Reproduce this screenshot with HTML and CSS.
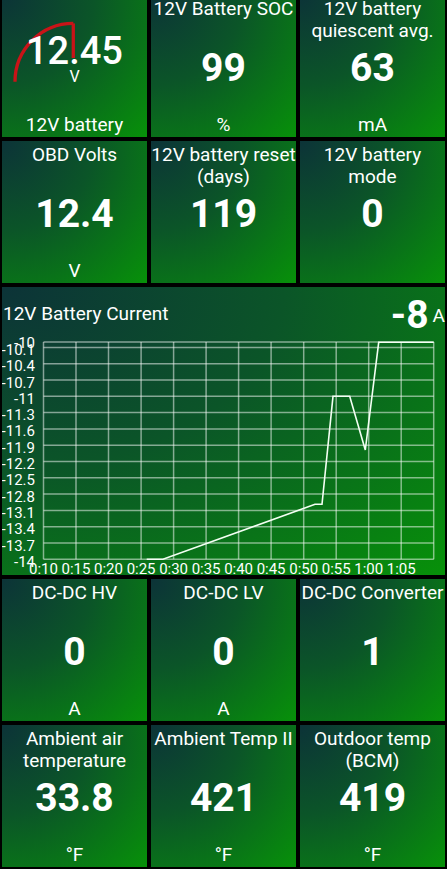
FILE: index.html
```html
<!DOCTYPE html>
<html lang="en">
<head>
    <meta charset="UTF-8">
    <meta name="viewport" content="width=device-width, initial-scale=1.0">
    <title>Dashboard</title>
    <link rel="stylesheet" href="styles.css">
</head>
<body>
    <div class="dash">
        <div class="tile gauge-tile">
            <svg class="gauge" viewBox="0 0 145 142">
                <path d="M13 86.7 A58.3 58.3 0 0 1 71.3 28.4" />
                <path d="M71.3 28.4 V63" />
            </svg>
            <div class="reading">
                <span class="big">12.45</span>
                <span class="small">V</span>
            </div>
            <div class="unit">12V battery</div>
        </div>
        <div class="tile">
            <div class="title">12V Battery SOC</div>
            <div class="value">99</div>
            <div class="unit">%</div>
        </div>
        <div class="tile">
            <div class="title">12V battery<br>quiescent avg.</div>
            <div class="value">63</div>
            <div class="unit">mA</div>
        </div>

        <div class="tile">
            <div class="title">OBD Volts</div>
            <div class="value">12.4</div>
            <div class="unit">V</div>
        </div>
        <div class="tile">
            <div class="title">12V battery reset<br>(days)</div>
            <div class="value">119</div>
        </div>
        <div class="tile">
            <div class="title">12V battery<br>mode</div>
            <div class="value">0</div>
        </div>

        <div class="tile chart-tile">
            <div class="chart-head">
                <span class="chart-title">12V Battery Current</span>
                <span class="chart-value">-8</span>
                <span class="chart-unit">A</span>
            </div>
            <svg class="chart" viewBox="2 334 443 241">
                <path class="grid" d="M43.5 342H433.7 M43.5 347.4H433.7 M43.5 363.7H433.7 M43.5 380H433.7
                    M43.5 396.3H433.7 M43.5 412.6H433.7 M43.5 428.9H433.7 M43.5 445.2H433.7
                    M43.5 461.5H433.7 M43.5 477.8H433.7 M43.5 494.1H433.7 M43.5 510.4H433.7
                    M43.5 526.7H433.7 M43.5 543H433.7 M43.5 559.3H433.7" />
                <path class="grid" d="M43.5 342V559.3 M76 342V559.3 M108.5 342V559.3 M141.1 342V559.3
                    M173.6 342V559.3 M206.1 342V559.3 M238.6 342V559.3 M271.1 342V559.3
                    M303.7 342V559.3 M336.2 342V559.3 M368.7 342V559.3 M401.2 342V559.3 M433.7 342V559.3" />
                <polyline class="line" points="146.7,559.3 163,559.3 315,504.3 322,504.3 333,396.3 349.7,396.3 365.3,450 378.7,342.3 433.7,342.3" />
                <g class="ylabels">
                    <text x="35" y="348">-10</text>
                    <text x="35" y="355">-10.1</text>
                    <text x="35" y="371.2">-10.4</text>
                    <text x="35" y="387.5">-10.7</text>
                    <text x="35" y="403.8">-11</text>
                    <text x="35" y="420.1">-11.3</text>
                    <text x="35" y="436.4">-11.6</text>
                    <text x="35" y="452.7">-11.9</text>
                    <text x="35" y="469">-12.2</text>
                    <text x="35" y="485.3">-12.5</text>
                    <text x="35" y="501.6">-12.8</text>
                    <text x="35" y="517.9">-13.1</text>
                    <text x="35" y="534.2">-13.4</text>
                    <text x="35" y="550.5">-13.7</text>
                    <text x="35" y="566.8">-14</text>
                </g>
                <g class="xlabels">
                    <text x="43.5" y="573.5">0:10</text>
                    <text x="76" y="573.5">0:15</text>
                    <text x="108.5" y="573.5">0:20</text>
                    <text x="141.1" y="573.5">0:25</text>
                    <text x="173.6" y="573.5">0:30</text>
                    <text x="206.1" y="573.5">0:35</text>
                    <text x="238.6" y="573.5">0:40</text>
                    <text x="271.1" y="573.5">0:45</text>
                    <text x="303.7" y="573.5">0:50</text>
                    <text x="336.2" y="573.5">0:55</text>
                    <text x="368.7" y="573.5">1:00</text>
                    <text x="401.2" y="573.5">1:05</text>
                </g>
            </svg>
        </div>

        <div class="tile">
            <div class="title">DC-DC HV</div>
            <div class="value">0</div>
            <div class="unit">A</div>
        </div>
        <div class="tile">
            <div class="title">DC-DC LV</div>
            <div class="value">0</div>
            <div class="unit">A</div>
        </div>
        <div class="tile">
            <div class="title">DC-DC Converter</div>
            <div class="value">1</div>
        </div>

        <div class="tile">
            <div class="title">Ambient air<br>temperature</div>
            <div class="value">33.8</div>
            <div class="unit">°F</div>
        </div>
        <div class="tile">
            <div class="title">Ambient Temp II</div>
            <div class="value">421</div>
            <div class="unit">°F</div>
        </div>
        <div class="tile">
            <div class="title">Outdoor temp<br>(BCM)</div>
            <div class="value">419</div>
            <div class="unit">°F</div>
        </div>
    </div>
</body>
</html>
```

FILE: styles.css
```css
body {
    margin: 0;
    background: #000;
    font-family: Roboto, "Liberation Sans", sans-serif;
    color: #fff;
    overflow: hidden;
}
.dash {
    display: grid;
    grid-template-columns: repeat(3, 1fr);
    grid-auto-rows: 142px;
    gap: 4px;
    padding: 2px;
    margin-top: -7px;
}
.tile {
    display: grid;
    text-align: center;
    background: radial-gradient(ellipse farthest-corner at 0 0, #0c3338 0%, #0b5528 45%, #079109 100%);
}
.tile > * {
    grid-area: 1 / 1;
}
.title {
    align-self: start;
    padding-top: 3px;
    font-size: 19px;
    line-height: 22px;
    white-space: nowrap;
}
.value {
    align-self: center;
    padding-top: 4px;
    font-size: 39px;
    font-weight: 700;
    line-height: 39px;
}
.unit {
    align-self: end;
    padding-bottom: 1px;
    font-size: 19px;
    line-height: 22px;
}

/* 12V battery gauge */
.gauge {
    width: 100%;
    height: 100%;
}
.gauge path {
    fill: none;
    stroke: #c81418;
    stroke-width: 3.3;
}
.reading {
    align-self: start;
    padding-top: 37px;
    display: flex;
    flex-direction: column;
    align-items: center;
}
.reading .big {
    font-size: 38px;
    line-height: 38px;
    font-weight: 500;
}
.reading .small {
    font-size: 16px;
    line-height: 16px;
    margin-top: -1px;
}

/* chart */
.chart-tile {
    grid-column: 1 / -1;
    grid-row: span 2;
    display: flex;
    flex-direction: column;
    text-align: left;
}
.chart-head {
    display: flex;
    align-items: center;
    height: 47px;
    padding: 5px 0 0 1px;
    box-sizing: border-box;
}
.chart-title {
    font-size: 19px;
}
.chart-value {
    margin-left: auto;
    padding-top: 4px;
    font-size: 39px;
    font-weight: 700;
    line-height: 39px;
}
.chart-unit {
    margin-left: 4px;
    padding-top: 4px;
    font-size: 19px;
}
.chart {
    display: block;
    width: 443px;
    height: 241px;
}
.chart .grid {
    fill: none;
    stroke: rgba(255, 255, 255, 0.5);
    stroke-width: 1.5;
}
.chart .line {
    fill: none;
    stroke: #f4fff4;
    stroke-width: 1.6;
}
.chart text {
    fill: #fff;
    font-size: 15px;
}
.ylabels {
    text-anchor: end;
}
.xlabels {
    text-anchor: middle;
}
```
